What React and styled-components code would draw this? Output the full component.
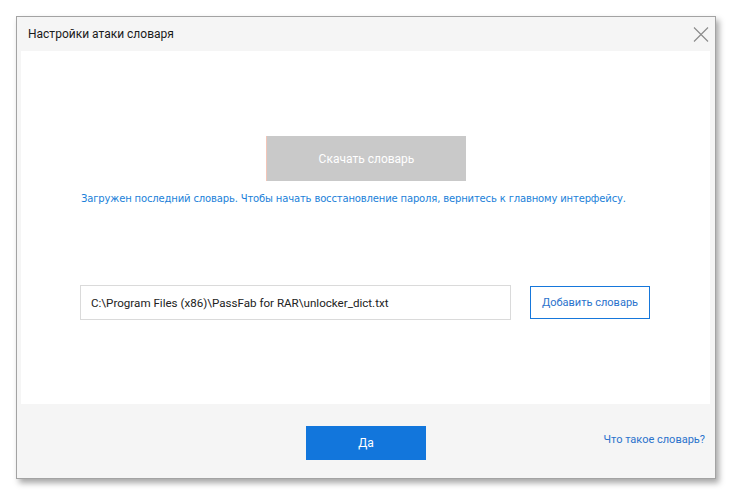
import React from "react";
import styled, { createGlobalStyle } from "styled-components";

const Global = createGlobalStyle`
  html, body { margin: 0; padding: 0; background: #ffffff; }
  body { font-family: Roboto, "Noto Sans", sans-serif; }
`;

const Page = styled.div`
  padding: 16px 0 0 16px;
  width: 732px;
  height: 495px;
  box-sizing: border-box;
`;

const Window = styled.div`
  width: 700px;
  height: 463px;
  box-sizing: border-box;
  border: 1px solid #a3a3a3;
  background: #f5f5f5;
  box-shadow: 3px 4px 6px rgba(0, 0, 0, 0.35);
  display: flex;
  flex-direction: column;
`;

const TitleBar = styled.div`
  height: 34px;
  display: flex;
  align-items: center;
  justify-content: space-between;
  padding: 0 6px 0 11px;
  flex-shrink: 0;
`;

const Title = styled.span`
  font-size: 12px;
  color: #1a1a1a;
`;

const CloseButton = styled.button`
  border: none;
  background: none;
  padding: 0;
  width: 16px;
  height: 16px;
  display: flex;
  align-items: center;
  justify-content: center;
`;

const Panel = styled.div`
  margin: 0 5px 0 4px;
  height: 353px;
  background: #ffffff;
  display: flex;
  flex-direction: column;
  flex-shrink: 0;
`;

const DownloadRow = styled.div`
  display: flex;
  justify-content: center;
  padding-top: 85px;
`;

const DownloadButton = styled.button`
  width: 200px;
  height: 45px;
  background: #c9c9c9;
  border: none;
  border-left: 1px solid #f2c5b8;
  color: #ffffff;
  font-family: inherit;
  font-size: 12px;
  padding: 0;
  margin-left: 1px;
`;

const Info = styled.p`
  margin: 12px 0 0 60px;
  font-family: "DejaVu Sans", sans-serif;
  font-size: 10px;
  color: #1a7fd9;
  letter-spacing: -0.15px;
`;

const PathRow = styled.div`
  display: flex;
  align-items: center;
  gap: 19px;
  margin: 81px 0 0 59px;
`;

const PathField = styled.div`
  width: 431px;
  height: 35px;
  box-sizing: border-box;
  border: 1px solid #dadada;
  display: flex;
  align-items: center;
  padding-left: 10px;
  font-size: 11.6px;
  color: #222222;
`;

const OutlineButton = styled.button`
  width: 120px;
  height: 33px;
  box-sizing: border-box;
  border: 1px solid #1677db;
  background: #ffffff;
  color: #2a72cc;
  font-family: inherit;
  font-size: 11px;
  padding: 0;
`;

const Footer = styled.div`
  flex: 1;
  position: relative;
  display: flex;
  justify-content: center;
  align-items: flex-start;
  padding-top: 22px;
`;

const PrimaryButton = styled.button`
  width: 120px;
  height: 34px;
  background: #1276dc;
  border: none;
  color: #ffffff;
  font-family: inherit;
  font-size: 12px;
  padding: 0;
`;

const HelpLink = styled.a`
  position: absolute;
  right: 10px;
  top: 29px;
  font-size: 11px;
  color: #2a72cc;
  text-decoration: none;
`;

export default function App() {
  return (
    <Page>
      <Global />
      <Window>
        <TitleBar>
          <Title>Настройки атаки словаря</Title>
          <CloseButton aria-label="close">
            <svg width="16" height="15" viewBox="0 0 16 15">
              <path d="M1 0.5 L15 14.5 M15 0.5 L1 14.5" stroke="#8a8a8a" strokeWidth="1.1" fill="none" />
            </svg>
          </CloseButton>
        </TitleBar>
        <Panel>
          <DownloadRow>
            <DownloadButton>Скачать словарь</DownloadButton>
          </DownloadRow>
          <Info>
            Загружен последний словарь. Чтобы начать восстановление пароля, вернитесь к главному интерфейсу.
          </Info>
          <PathRow>
            <PathField>C:\Program Files (x86)\PassFab for RAR\unlocker_dict.txt</PathField>
            <OutlineButton>Добавить словарь</OutlineButton>
          </PathRow>
        </Panel>
        <Footer>
          <PrimaryButton>Да</PrimaryButton>
          <HelpLink href="#">Что такое словарь?</HelpLink>
        </Footer>
      </Window>
    </Page>
  );
}
